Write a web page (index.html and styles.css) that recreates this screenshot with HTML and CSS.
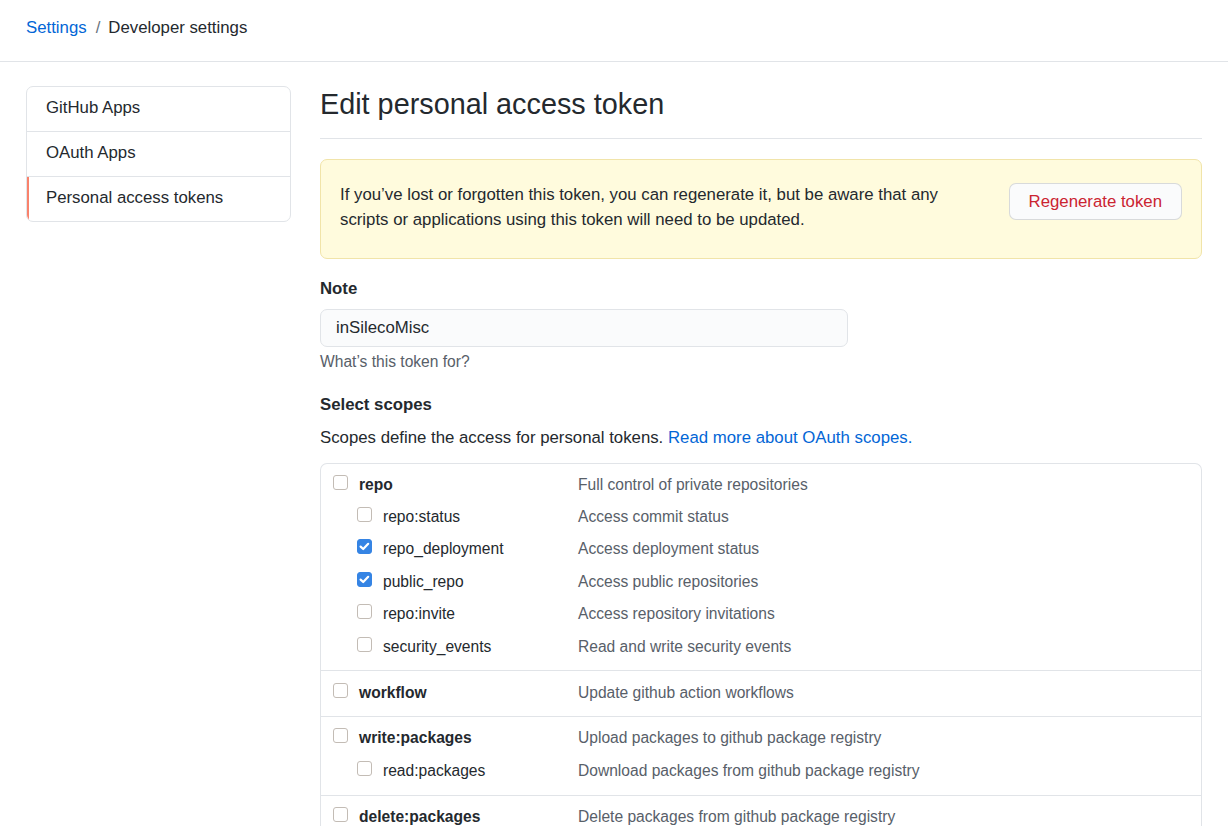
FILE: index.html
```html
<!DOCTYPE html>
<html lang="en">
<head>
<meta charset="utf-8">
<title>Edit personal access token</title>
<link rel="stylesheet" href="styles.css">
</head>
<body>
<header class="topbar">
  <nav class="breadcrumb"><a href="#" class="crumb-link">Settings</a><span class="crumb-sep">/</span><span class="crumb-current">Developer settings</span></nav>
</header>
<div class="layout">
  <aside class="sidebar">
    <a href="#" class="menu-item">GitHub Apps</a>
    <a href="#" class="menu-item">OAuth Apps</a>
    <a href="#" class="menu-item selected">Personal access tokens</a>
  </aside>
  <main class="main">
    <h1 class="subhead">Edit personal access token</h1>
    <div class="flash">
      <p class="flash-text">If you’ve lost or forgotten this token, you can regenerate it, but be aware that any scripts or applications using this token will need to be updated.</p>
      <button class="btn-danger" type="button">Regenerate token</button>
    </div>
    <label class="field-label" for="note">Note</label>
    <input id="note" class="input" type="text" value="inSilecoMisc">
    <p class="note">What’s this token for?</p>
    <h2 class="field-label scopes-title">Select scopes</h2>
    <p class="scopes-intro">Scopes define the access for personal tokens. <a href="#" class="link">Read more about OAuth scopes.</a></p>
    <div class="scopes">
      <div class="scope-group">
        <div class="scope-row"><div class="scope-name"><span class="cb"></span><strong>repo</strong></div><div class="scope-desc">Full control of private repositories</div></div>
        <div class="scope-row sub"><div class="scope-name"><span class="cb"></span>repo:status</div><div class="scope-desc">Access commit status</div></div>
        <div class="scope-row sub"><div class="scope-name"><span class="cb checked"><svg viewBox="0 0 15 15" width="15" height="15"><polyline points="3.6,7.6 6.2,10 11.2,4.8" fill="none" stroke="#fff" stroke-width="2.2" stroke-linecap="round" stroke-linejoin="round"/></svg></span>repo_deployment</div><div class="scope-desc">Access deployment status</div></div>
        <div class="scope-row sub"><div class="scope-name"><span class="cb checked"><svg viewBox="0 0 15 15" width="15" height="15"><polyline points="3.6,7.6 6.2,10 11.2,4.8" fill="none" stroke="#fff" stroke-width="2.2" stroke-linecap="round" stroke-linejoin="round"/></svg></span>public_repo</div><div class="scope-desc">Access public repositories</div></div>
        <div class="scope-row sub"><div class="scope-name"><span class="cb"></span>repo:invite</div><div class="scope-desc">Access repository invitations</div></div>
        <div class="scope-row sub"><div class="scope-name"><span class="cb"></span>security_events</div><div class="scope-desc">Read and write security events</div></div>
      </div>
      <div class="scope-group">
        <div class="scope-row"><div class="scope-name"><span class="cb"></span><strong>workflow</strong></div><div class="scope-desc">Update github action workflows</div></div>
      </div>
      <div class="scope-group">
        <div class="scope-row"><div class="scope-name"><span class="cb"></span><strong>write:packages</strong></div><div class="scope-desc">Upload packages to github package registry</div></div>
        <div class="scope-row sub"><div class="scope-name"><span class="cb"></span>read:packages</div><div class="scope-desc">Download packages from github package registry</div></div>
      </div>
      <div class="scope-group">
        <div class="scope-row"><div class="scope-name"><span class="cb"></span><strong>delete:packages</strong></div><div class="scope-desc">Delete packages from github package registry</div></div>
      </div>
    </div>
  </main>
</div>
</body>
</html>
```
FILE: styles.css
```css
* { box-sizing: border-box; }
html, body { margin: 0; padding: 0; background: #fff; }
body {
  font-family: "Liberation Sans", Arial, Helvetica, sans-serif;
  font-size: 16.8px;
  line-height: 25px;
  color: #24292e;
  overflow: hidden;
}
a { text-decoration: none; }

.topbar {
  padding: 15px 26px 21px;
  border-bottom: 1px solid #e1e4e8;
}
.breadcrumb { display: flex; align-items: center; }
.crumb-link { color: #0366d6; }
.crumb-sep { color: #6a737d; margin: 0 8px 0 9px; }
.crumb-current { color: #24292e; }

.layout {
  display: grid;
  grid-template-columns: 265px 1fr;
  column-gap: 29px;
  margin: 0 26px;
  padding-top: 24px;
  align-items: start;
}

.sidebar {
  display: flex;
  flex-direction: column;
  border: 1px solid #e1e4e8;
  border-radius: 7px;
  overflow: hidden;
}
.menu-item {
  display: block;
  padding: 8px 19px 11px;
  line-height: 25px;
  color: #24292e;
  border-top: 1px solid #e1e4e8;
}
.menu-item:first-child { border-top: 0; }
.menu-item.selected { box-shadow: inset 2px 0 0 #f9826c; }

.main { min-width: 0; }
.subhead {
  margin: 0;
  font-size: 28.8px;
  font-weight: 400;
  line-height: 36px;
  padding-bottom: 16px;
  border-bottom: 1px solid #e1e4e8;
  color: #24292e;
}

.flash {
  margin-top: 20px;
  display: flex;
  justify-content: space-between;
  align-items: flex-start;
  padding: 22px 19px 26px;
  background: #fffbdd;
  border: 1px solid #f1e4a9;
  border-radius: 7px;
}
.flash-text {
  margin: 0;
  max-width: 620px;
  line-height: 25px;
}
.btn-danger {
  margin-top: 1px;
  font-family: inherit;
  font-size: 16.8px;
  line-height: 24px;
  padding: 5.5px 19px;
  color: #cb2431;
  background: #fafbfc;
  border: 1px solid rgba(27, 31, 35, 0.15);
  border-radius: 7px;
  white-space: nowrap;
}

.field-label {
  display: block;
  margin: 17px 0 0;
  font-size: 16.8px;
  font-weight: 700;
  line-height: 25px;
}
.input {
  display: block;
  margin-top: 7.5px;
  width: 528px;
  height: 38px;
  padding: 0 15px;
  font-family: inherit;
  font-size: 16.8px;
  color: #24292e;
  background: #fafbfc;
  border: 1px solid #e1e4e8;
  border-radius: 7px;
}
.note {
  margin: 3.5px 0 0;
  font-size: 15.6px;
  line-height: 23px;
  color: #586069;
}
.scopes-title { margin-top: 19px; }
.scopes-intro {
  margin: 8px 0 0;
  line-height: 25px;
}
.link { color: #0366d6; }

.scopes {
  margin-top: 12.5px;
  border: 1px solid #e1e4e8;
  border-radius: 7px 7px 0 0;
  border-bottom: 0;
  font-size: 15.6px;
}
.scope-group {
  padding: 4.5px 0 8px;
  border-top: 1px solid #e1e4e8;
}
.scope-group:first-child { border-top: 0; }
.scope-row {
  display: flex;
  align-items: center;
  height: 32.4px;
}
.scope-name {
  flex: 0 0 257px;
  display: flex;
  align-items: center;
  gap: 11px;
  padding-left: 12px;
  color: #24292e;
}
.scope-row.sub .scope-name { padding-left: 36px; }
.scope-name strong { font-weight: 700; }
.scope-desc { color: #586069; }

.cb {
  flex: 0 0 auto;
  width: 15px;
  height: 15px;
  margin-top: -4px;
  border: 1px solid #c3bcb5;
  border-radius: 3px;
  background: #fff;
  display: block;
  position: relative;
}
.cb.checked {
  background: #3584e4;
  border-color: #3584e4;
}
.cb.checked svg {
  position: absolute;
  left: -1px;
  top: -1px;
}
```
